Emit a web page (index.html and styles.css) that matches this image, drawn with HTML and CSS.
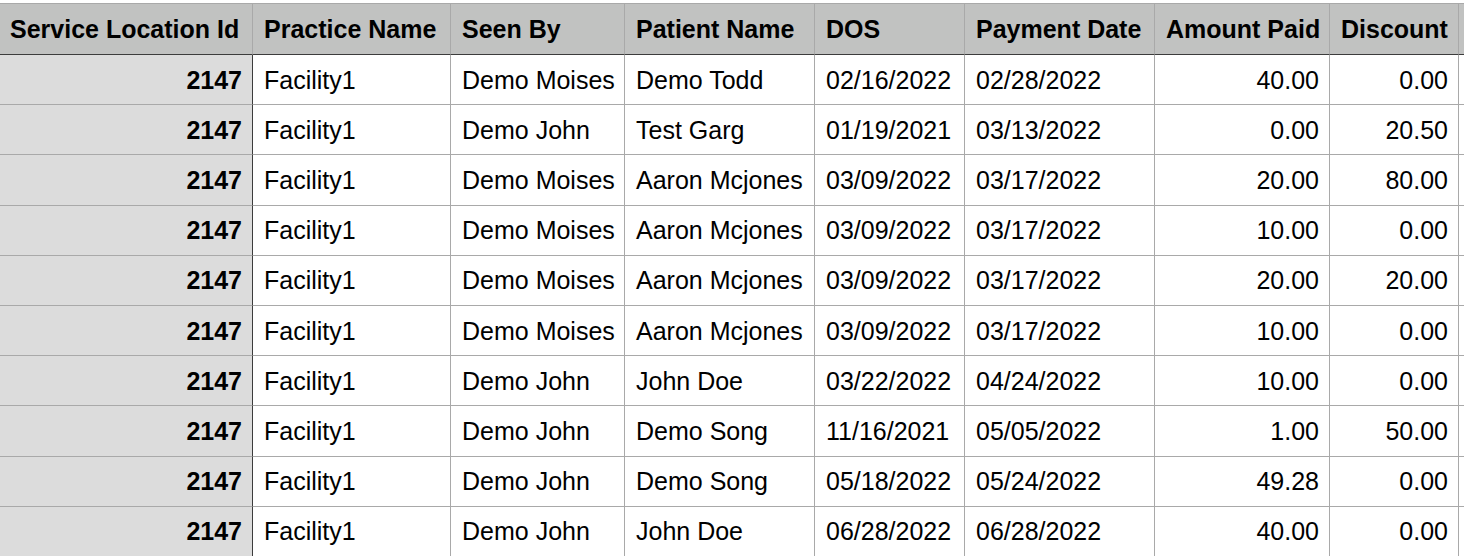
FILE: index.html
```html
<!DOCTYPE html>
<html>
<head>
<meta charset="utf-8">
<link rel="stylesheet" href="styles.css">
</head>
<body>
<div class="sheet">
<table class="grid">
  <colgroup>
    <col class="c1"><col class="c2"><col class="c3"><col class="c4"><col class="c5"><col class="c6"><col class="c7"><col class="c8"><col class="c9">
  </colgroup>
  <thead>
    <tr class="head">
      <th class="key">Service Location Id</th>
      <th>Practice Name</th>
      <th>Seen By</th>
      <th>Patient Name</th>
      <th>DOS</th>
      <th>Payment Date</th>
      <th>Amount Paid</th>
      <th>Discount</th>
      <th class="edge"></th>
    </tr>
  </thead>
  <tbody>
    <tr><td class="key">2147</td><td>Facility1</td><td>Demo Moises</td><td>Demo Todd</td><td>02/16/2022</td><td>02/28/2022</td><td class="num">40.00</td><td class="num">0.00</td><td class="edge"></td></tr>
    <tr><td class="key">2147</td><td>Facility1</td><td>Demo John</td><td>Test Garg</td><td>01/19/2021</td><td>03/13/2022</td><td class="num">0.00</td><td class="num">20.50</td><td class="edge"></td></tr>
    <tr><td class="key">2147</td><td>Facility1</td><td>Demo Moises</td><td>Aaron Mcjones</td><td>03/09/2022</td><td>03/17/2022</td><td class="num">20.00</td><td class="num">80.00</td><td class="edge"></td></tr>
    <tr><td class="key">2147</td><td>Facility1</td><td>Demo Moises</td><td>Aaron Mcjones</td><td>03/09/2022</td><td>03/17/2022</td><td class="num">10.00</td><td class="num">0.00</td><td class="edge"></td></tr>
    <tr><td class="key">2147</td><td>Facility1</td><td>Demo Moises</td><td>Aaron Mcjones</td><td>03/09/2022</td><td>03/17/2022</td><td class="num">20.00</td><td class="num">20.00</td><td class="edge"></td></tr>
    <tr><td class="key">2147</td><td>Facility1</td><td>Demo Moises</td><td>Aaron Mcjones</td><td>03/09/2022</td><td>03/17/2022</td><td class="num">10.00</td><td class="num">0.00</td><td class="edge"></td></tr>
    <tr><td class="key">2147</td><td>Facility1</td><td>Demo John</td><td>John Doe</td><td>03/22/2022</td><td>04/24/2022</td><td class="num">10.00</td><td class="num">0.00</td><td class="edge"></td></tr>
    <tr><td class="key">2147</td><td>Facility1</td><td>Demo John</td><td>Demo Song</td><td>11/16/2021</td><td>05/05/2022</td><td class="num">1.00</td><td class="num">50.00</td><td class="edge"></td></tr>
    <tr><td class="key">2147</td><td>Facility1</td><td>Demo John</td><td>Demo Song</td><td>05/18/2022</td><td>05/24/2022</td><td class="num">49.28</td><td class="num">0.00</td><td class="edge"></td></tr>
    <tr><td class="key">2147</td><td>Facility1</td><td>Demo John</td><td>John Doe</td><td>06/28/2022</td><td>06/28/2022</td><td class="num">40.00</td><td class="num">0.00</td><td class="edge"></td></tr>
  </tbody>
</table>
</div>
</body>
</html>
```

FILE: styles.css
```css
html, body {
  margin: 0;
  padding: 0;
  background: #ffffff;
  overflow: hidden;
}

.sheet {
  padding-top: 3px;
  width: 1464px;
}

.grid {
  border-collapse: separate;
  border-spacing: 0;
  table-layout: fixed;
  width: 1464px;
  font-family: "Liberation Sans", Arial, Helvetica, sans-serif;
  font-size: 25px;
  color: #000;
}

.c1 { width: 253px; }
.c2 { width: 198px; }
.c3 { width: 174px; }
.c4 { width: 190px; }
.c5 { width: 150px; }
.c6 { width: 190px; }
.c7 { width: 175px; }
.c8 { width: 129px; }
.c9 { width: 5px; }

.grid th,
.grid td {
  padding: 1px 10px 0 11px;
  white-space: nowrap;
  overflow: hidden;
  vertical-align: middle;
  border-right: 1px solid #a9a9a9;
  border-bottom: 1px solid #a9a9a9;
}

.grid th.edge,
.grid td.edge {
  padding: 0;
  border-right: 0;
}

.head {
  height: 52px;
}

.grid th {
  background: #c1c2c1;
  font-weight: bold;
  text-align: left;
  border-top: 1px solid #a9a9a9;
  border-bottom: 1px solid #3c3c3c;
}

.grid th.key {
  padding-left: 10px;
}

.grid tbody tr {
  height: 50.2px;
}

.grid td.key {
  background: #dcdcdc;
  font-weight: bold;
  text-align: right;
  border-right: 1px solid #3c3c3c;
}

.grid td.num {
  text-align: right;
}
```
